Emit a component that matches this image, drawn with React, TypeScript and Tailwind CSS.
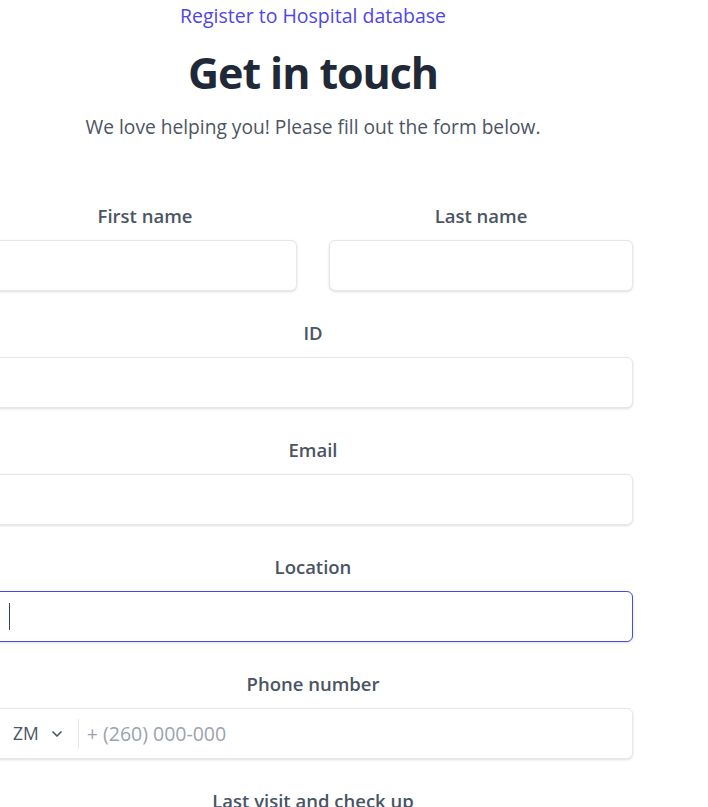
import { ChevronDown } from "lucide-react";

const font = { fontFamily: '"Open Sans", "Noto Sans", sans-serif' };

const Field = ({ label, children }: { label: string; children: React.ReactNode }) => {
  return (
    <div className="flex flex-col">
      <label className="text-center text-[18.5px] leading-7 font-semibold text-[#4b5563]">
        {label}
      </label>
      <div className="mt-2.5">{children}</div>
    </div>
  );
};

const inputCls =
  "block w-full h-[51px] rounded-md border border-[#e5e7eb] bg-white px-4 text-[18px] text-gray-900 shadow-sm outline-none";

export default function App() {
  return (
    <div className="min-h-screen bg-white overflow-hidden" style={font}>
      <div className="w-[626px] flex flex-col items-center">
        <p className="text-[19.5px] leading-8 font-medium text-[#4f46e5]">
          Register to Hospital database
        </p>
        <h1 className="mt-[13px] text-[43px] leading-[56px] font-bold tracking-tight text-[#1f2937]">
          Get in touch
        </h1>
        <p className="mt-3 text-[19.2px] leading-7 text-[#4b5563]">
          We love helping you! Please fill out the form below.
        </p>

        <form className="mt-[61px] w-[640px] shrink-0 grid grid-cols-2 gap-x-8 gap-y-7">
          <Field label="First name">
            <input type="text" className={inputCls} />
          </Field>
          <Field label="Last name">
            <input type="text" className={inputCls} />
          </Field>
          <div className="col-span-2">
            <Field label="ID">
              <input type="text" className={inputCls} />
            </Field>
          </div>
          <div className="col-span-2">
            <Field label="Email">
              <input type="email" className={inputCls} />
            </Field>
          </div>
          <div className="col-span-2">
            <Field label="Location">
              <div className="flex items-center h-[51px] w-full rounded-md border border-[#4f46e5] bg-white pl-[15px] pr-4 shadow-sm">
                <span className="block w-px h-[27px] bg-gray-700" />
              </div>
            </Field>
          </div>
          <div className="col-span-2">
            <Field label="Phone number">
              <div className="flex items-center h-[51px] w-full rounded-md border border-[#e5e7eb] bg-white shadow-sm">
                <div className="flex items-center pl-[19px] pr-[13px] h-full">
                  <span className="text-[17.5px] text-[#4b5563]">ZM</span>
                  <ChevronDown className="ml-2.5 w-4 h-4 text-[#4b5563]" strokeWidth={2.5} />
                </div>
                <span className="block w-px h-[30px] bg-[#e5e7eb]" />
                <input
                  type="tel"
                  placeholder="+ (260) 000-000"
                  className="flex-1 h-full pl-2 pr-4 bg-transparent text-[19.5px] text-gray-900 placeholder:text-[#9ca3af] outline-none"
                />
              </div>
            </Field>
          </div>
          <div className="col-span-2">
            <Field label="Last visit and check up">
              <input type="date" className={inputCls} />
            </Field>
          </div>
        </form>
      </div>
    </div>
  );
}
